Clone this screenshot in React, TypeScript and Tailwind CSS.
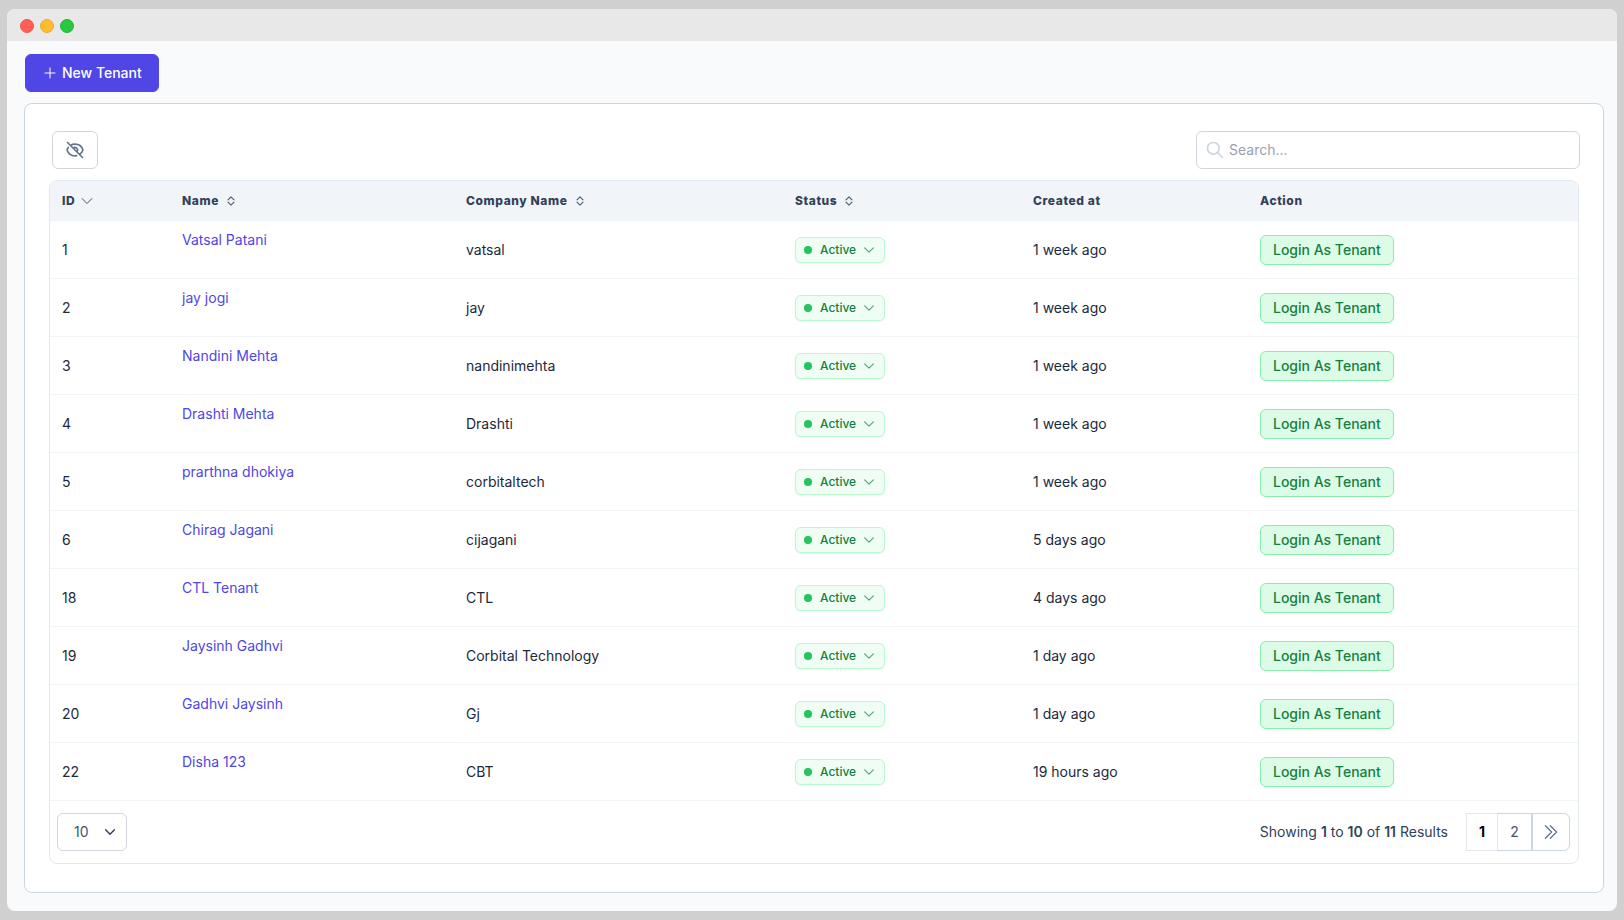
import { useState } from "react";

type Tenant = {
  id: number;
  name: string;
  company: string;
  createdAt: string;
};

const tenants: Tenant[] = [
  { id: 1, name: "Vatsal Patani", company: "vatsal", createdAt: "1 week ago" },
  { id: 2, name: "jay jogi", company: "jay", createdAt: "1 week ago" },
  { id: 3, name: "Nandini Mehta", company: "nandinimehta", createdAt: "1 week ago" },
  { id: 4, name: "Drashti Mehta", company: "Drashti", createdAt: "1 week ago" },
  { id: 5, name: "prarthna dhokiya", company: "corbitaltech", createdAt: "1 week ago" },
  { id: 6, name: "Chirag Jagani", company: "cijagani", createdAt: "5 days ago" },
  { id: 18, name: "CTL Tenant", company: "CTL", createdAt: "4 days ago" },
  { id: 19, name: "Jaysinh Gadhvi", company: "Corbital Technology", createdAt: "1 day ago" },
  { id: 20, name: "Gadhvi Jaysinh", company: "Gj", createdAt: "1 day ago" },
  { id: 22, name: "Disha 123", company: "CBT", createdAt: "19 hours ago" },
];

type StrokeIconProps = {
  d: string;
  className: string;
  strokeWidth?: number;
};

function StrokeIcon({ d, className, strokeWidth = 1.5 }: StrokeIconProps) {
  return (
    <svg
      viewBox="0 0 24 24"
      fill="none"
      stroke="currentColor"
      strokeWidth={strokeWidth}
      strokeLinecap="round"
      strokeLinejoin="round"
      className={className}
      aria-hidden="true"
    >
      <path d={d} />
    </svg>
  );
}

const CHEVRON_DOWN = "m19.5 8.25-7.5 7.5-7.5-7.5";

function SortIcon() {
  return (
    <svg
      viewBox="0 0 16 16"
      fill="currentColor"
      stroke="currentColor"
      strokeWidth={0.3}
      className="size-3 text-slate-600"
      aria-hidden="true"
    >
      <path d="M3.646 9.146a.5.5 0 0 1 .708 0L8 12.793l3.646-3.647a.5.5 0 0 1 .708.708l-4 4a.5.5 0 0 1-.708 0l-4-4a.5.5 0 0 1 0-.708zm0-2.292a.5.5 0 0 0 .708 0L8 3.207l3.646 3.647a.5.5 0 0 0 .708-.708l-4-4a.5.5 0 0 0-.708 0l-4 4a.5.5 0 0 0 0 .708z" />
    </svg>
  );
}

function TitleBar() {
  return (
    <div className="flex h-8 items-center gap-1.5 bg-[#e8e8e8] px-[13px] pt-0.5">
      <span className="size-3.5 rounded-full border border-[#f2544d] bg-[#ff5f57]" />
      <span className="size-3.5 rounded-full border border-[#eca933] bg-[#febc2e]" />
      <span className="size-3.5 rounded-full border border-[#22b53a] bg-[#28c840]" />
    </div>
  );
}

function SortableHeader({ label }: { label: string }) {
  return (
    <th scope="col" className="px-3 text-left">
      <button type="button" className="flex items-center gap-1.5 font-extrabold tracking-wider">
        {label}
        <SortIcon />
      </button>
    </th>
  );
}

function TenantRow({ tenant }: { tenant: Tenant }) {
  return (
    <tr className="h-[58px] *:border-b *:border-slate-100">
      <td className="px-3 pt-px">{tenant.id}</td>
      <td className="px-3 pt-[9px] align-top">
        <a href={`#tenant-${tenant.id}`} className="text-[#4f46e5]">
          {tenant.name}
        </a>
      </td>
      <td className="px-3 pt-px">{tenant.company}</td>
      <td className="px-3 pt-px">
        <button
          type="button"
          className="flex h-[26px] items-center gap-1.5 rounded-md border border-[#bbf7d0] bg-[#f0fdf4] px-2 text-xs font-medium text-[#15803d] shadow-xs"
        >
          <span className="mr-0.5 size-2 rounded-full bg-[#22c55e]" />
          Active
          <StrokeIcon d={CHEVRON_DOWN} className="size-3.5 text-[#15803d]/70" strokeWidth={2} />
        </button>
      </td>
      <td className="px-3 pt-px">{tenant.createdAt}</td>
      <td className="px-3 pt-px">
        <button
          type="button"
          className="flex h-[30px] items-center rounded-md border border-[#86efac] bg-[#dcfce7] px-3 font-medium text-[#15803d]"
        >
          Login As Tenant
        </button>
      </td>
    </tr>
  );
}

export default function App() {
  const [search, setSearch] = useState("");
  const [perPage, setPerPage] = useState("10");

  return (
    <div className="min-h-screen bg-[#d0d0d0] px-[7px] py-[9px] font-['Inter',sans-serif] text-sm text-slate-800">
      <div className="overflow-hidden rounded-lg bg-slate-50">
        <TitleBar />

        <main className="pt-[13px] pr-[13px] pb-[18px] pl-[17px]">
          <button
            type="button"
            className="ml-px flex h-[38px] items-center gap-1 rounded-md border border-[#4f46e5] bg-[#4f46e5] px-4 font-medium text-white"
          >
            <StrokeIcon d="M12 4.5v15m7.5-7.5h-15" className="size-4" />
            New Tenant
          </button>

          <section className="mt-[11px] rounded-lg border border-slate-300 bg-white px-6 pt-[27px] pb-7">
            <div className="flex items-center justify-between pl-[3px]">
              <button
                type="button"
                aria-label="Toggle columns"
                className="flex h-[38px] items-center rounded-md border border-gray-300 bg-white px-3 text-slate-500"
              >
                <StrokeIcon
                  d="M13.875 18.825A10.05 10.05 0 0112 19c-4.478 0-8.268-2.943-9.543-7a9.97 9.97 0 011.563-3.029m5.858.908a3 3 0 114.243 4.243M9.878 9.878l4.242 4.242M9.88 9.88l-3.29-3.29m7.532 7.532l3.29 3.29M3 3l3.59 3.59m0 0A9.953 9.953 0 0112 5c4.478 0 8.268 2.943 9.543 7a10.025 10.025 0 01-4.132 5.411m0 0L21 21"
                  className="size-5"
                  strokeWidth={2}
                />
              </button>

              <div className="relative -mr-px w-96">
                <StrokeIcon
                  d="M21 21l-6-6m2-5a7 7 0 11-14 0 7 7 0 0114 0z"
                  className="absolute top-[9px] left-[9px] size-5 text-slate-300"
                  strokeWidth={2}
                />
                <input
                  type="text"
                  aria-label="Search"
                  placeholder="Search..."
                  value={search}
                  onChange={(e) => setSearch(e.target.value)}
                  className="h-[38px] w-full rounded-md border border-gray-300 pr-3 pb-0.5 pl-8 placeholder:text-gray-400"
                />
              </div>
            </div>

            <div className="mt-[11px] overflow-hidden rounded-lg border border-slate-200">
              <table className="w-full table-fixed border-separate border-spacing-0">
                <colgroup>
                  <col className="w-[120px]" />
                  <col className="w-[284px]" />
                  <col className="w-[329px]" />
                  <col className="w-[238px]" />
                  <col className="w-[227px]" />
                  <col />
                </colgroup>
                <thead className="bg-slate-100 text-xs text-slate-700 shadow-[0_1px_0_#f8fafc]">
                  <tr className="h-10">
                    <th scope="col" className="px-3 text-left">
                      <button type="button" className="flex items-center gap-1 font-extrabold tracking-wider">
                        ID
                        <StrokeIcon d={CHEVRON_DOWN} className="size-4 text-slate-600" />
                      </button>
                    </th>
                    <SortableHeader label="Name" />
                    <SortableHeader label="Company Name" />
                    <SortableHeader label="Status" />
                    <th scope="col" className="px-3 text-left font-extrabold tracking-wider">
                      Created at
                    </th>
                    <th scope="col" className="px-3 text-left font-extrabold tracking-wider">
                      Action
                    </th>
                  </tr>
                </thead>
                <tbody>
                  {tenants.map((tenant) => (
                    <TenantRow key={tenant.id} tenant={tenant} />
                  ))}
                </tbody>
              </table>

              <footer className="flex items-center justify-between py-3 pr-2 pl-[7px]">
                <div className="relative">
                  <select
                    aria-label="Rows per page"
                    value={perPage}
                    onChange={(e) => setPerPage(e.target.value)}
                    className="h-[38px] w-[70px] appearance-none rounded-md border border-gray-300 bg-white pl-4 text-slate-600"
                  >
                    <option>10</option>
                    <option>25</option>
                    <option>50</option>
                    <option>100</option>
                  </select>
                  <StrokeIcon
                    d={CHEVRON_DOWN}
                    className="pointer-events-none absolute top-3 right-2.5 size-3.5 text-slate-700"
                    strokeWidth={2.5}
                  />
                </div>

                <div className="flex items-center gap-[18px]">
                  <p className="text-slate-700">
                    Showing <b className="font-semibold">1</b> to <b className="font-semibold">10</b> of{" "}
                    <b className="font-semibold">11</b> Results
                  </p>
                  <nav aria-label="Pagination" className="flex h-[38px]">
                    <button
                      type="button"
                      aria-current="page"
                      className="w-[31px] border border-r-0 border-gray-200 font-bold text-black"
                    >
                      1
                    </button>
                    <button
                      type="button"
                      className="w-[35px] border border-l-gray-200 border-slate-300 text-slate-600"
                    >
                      2
                    </button>
                    <button
                      type="button"
                      aria-label="Last page"
                      className="flex w-[38px] items-center justify-center rounded-r-md border border-slate-300 text-slate-500"
                    >
                      <StrokeIcon d="m5.25 4.5 7.5 7.5-7.5 7.5m6-15 7.5 7.5-7.5 7.5" className="size-5" />
                    </button>
                  </nav>
                </div>
              </footer>
            </div>
          </section>
        </main>
      </div>
    </div>
  );
}
